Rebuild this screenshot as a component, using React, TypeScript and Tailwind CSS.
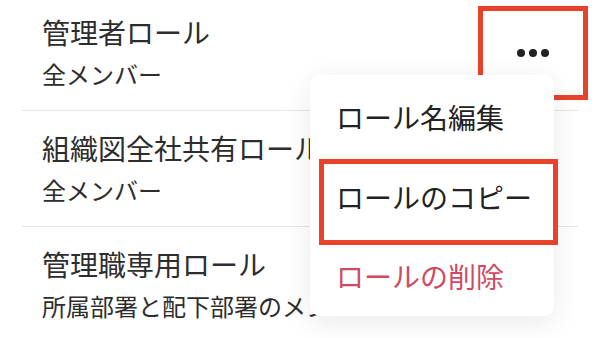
import React from 'react';

const ROLES = [
    { name: '管理者ロール', scope: '全メンバー' },
    { name: '組織図全社共有ロール', scope: '全メンバー' },
    { name: '管理職専用ロール', scope: '所属部署と配下部署のメンバー' },
];

const MENU = [
    { label: 'ロール名編集', danger: false },
    { label: 'ロールのコピー', danger: false },
    { label: 'ロールの削除', danger: true },
];

const FONT = { fontFamily: '"Noto Sans CJK JP", "Noto Sans", sans-serif' };

export default function App() {
    return (
        <div className="relative w-[606px] h-[338px] overflow-hidden bg-white" style={FONT}>
            {/* role list */}
            <div className="ml-[22px] w-[556px] flex flex-col">
                {ROLES.map((role, i) => (
                    <div
                        key={role.name}
                        className={`flex flex-col gap-[6px] pl-5 pb-5 border-b-[1.5px] border-[#e5e5ea] ${i === 0 ? 'pt-[12px]' : 'pt-[17px]'}`}
                    >
                        <div className="text-[28px] leading-[40px] text-[#2d2d2d] whitespace-nowrap">{role.name}</div>
                        <div className="text-[24px] leading-[32px] text-[#2d2d2d] whitespace-nowrap">{role.scope}</div>
                    </div>
                ))}
            </div>

            {/* more button (highlighted) */}
            <div className="absolute left-[478px] top-[6px] w-[110px] h-[94px] border-[5px] border-[#e8432a] flex items-center justify-center gap-[4px]">
                <span className="w-[8px] h-[8px] rounded-full bg-[#222]" />
                <span className="w-[8px] h-[8px] rounded-full bg-[#222]" />
                <span className="w-[8px] h-[8px] rounded-full bg-[#222]" />
            </div>

            {/* dropdown menu */}
            <div className="absolute left-[310px] top-[75px] w-[244px] h-[241px] bg-white rounded-[10px] shadow-[0_6px_28px_rgba(20,20,40,0.09)] pt-[2px] flex flex-col">
                {MENU.map(item => (
                    <div
                        key={item.label}
                        className={`h-[80px] flex items-center pl-[26px] text-[28px] ${item.danger ? 'text-[#cf4a64]' : 'text-[#222]'}`}
                    >
                        {item.label}
                    </div>
                ))}
            </div>

            {/* highlight around copy item */}
            <div className="absolute left-[319px] top-[159px] w-[239px] h-[86px] border-[5px] border-[#e8432a]" />
        </div>
    );
}
